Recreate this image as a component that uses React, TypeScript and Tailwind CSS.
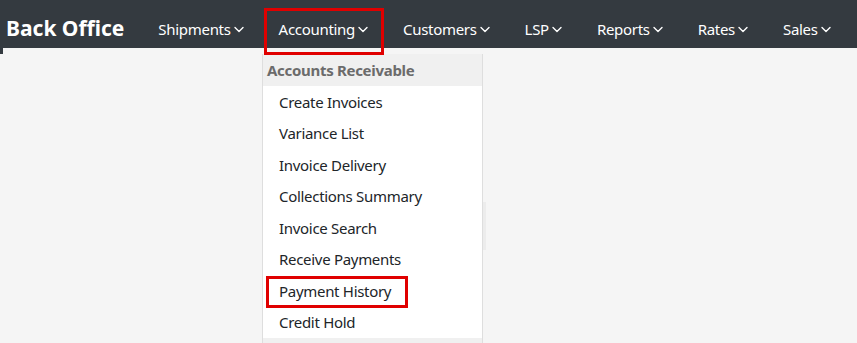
import React from "react";

const Chevron = () => (
  <svg width="10" height="7" viewBox="0 0 10 7" className="ml-[3px] mt-[1px]" fill="none">
    <path d="M1 1.5 L5 5.5 L9 1.5" stroke="white" strokeWidth="1.4" strokeLinecap="round" strokeLinejoin="round" />
  </svg>
);

const navItems = ["Shipments", "Accounting", "Customers", "LSP", "Reports", "Rates", "Sales"];

const items = [
  "Create Invoices",
  "Variance List",
  "Invoice Delivery",
  "Collections Summary",
  "Invoice Search",
  "Receive Payments",
  "Payment History",
  "Credit Hold",
];

export default function App() {
  return (
    <div
      className="relative w-[857px] h-[343px] overflow-hidden bg-[#f5f5f5]"
      style={{ fontFamily: '"Noto Sans", "Open Sans", sans-serif' }}
    >
      <header className="flex items-center h-[48px] bg-[#343a40] text-white">
        <div className="pl-[6px] pt-[8px] text-[21px] font-bold leading-none">Back Office</div>
        <nav className="flex items-center gap-[35px] pl-[34px] pt-[10px]">
          {navItems.map((n) => (
            <div key={n} className="flex items-center text-[15px] tracking-[-0.3px]">
              <span>{n}</span>
              <Chevron />
            </div>
          ))}
        </nav>
      </header>
      <div className="absolute left-0 top-[48px] w-[3px] h-[6px] bg-[#343a40]" />

      {/* content behind dropdown */}
      <div className="absolute left-[470px] top-[202px] w-[16px] h-[48px] bg-[#ececec]" />

      {/* dropdown menu */}
      <div className="absolute left-[262px] top-[54px] w-[221px] h-[300px] bg-white border-x border-[#dedede] flex flex-col">
        <div className="h-[32px] bg-[#f0f0f0] flex items-center pl-[4px] text-[15px] font-bold text-[#6b6b6b] tracking-[-0.3px]">
          Accounts Receivable
        </div>
        {items.map((it) => (
          <div key={it} className="h-[31.5px] flex items-center pl-[16px] text-[15px] text-[#212529] tracking-[-0.3px]">
            {it}
          </div>
        ))}
        <div className="flex-1 bg-[#f0f0f0]" />
      </div>

      {/* annotation boxes */}
      <div className="absolute left-[264px] top-[8px] w-[120px] h-[47px] border-[3px] border-[#e00000]" />
      <div className="absolute left-[266px] top-[276px] w-[142px] h-[32px] border-[3px] border-[#e00000]" />
    </div>
  );
}
